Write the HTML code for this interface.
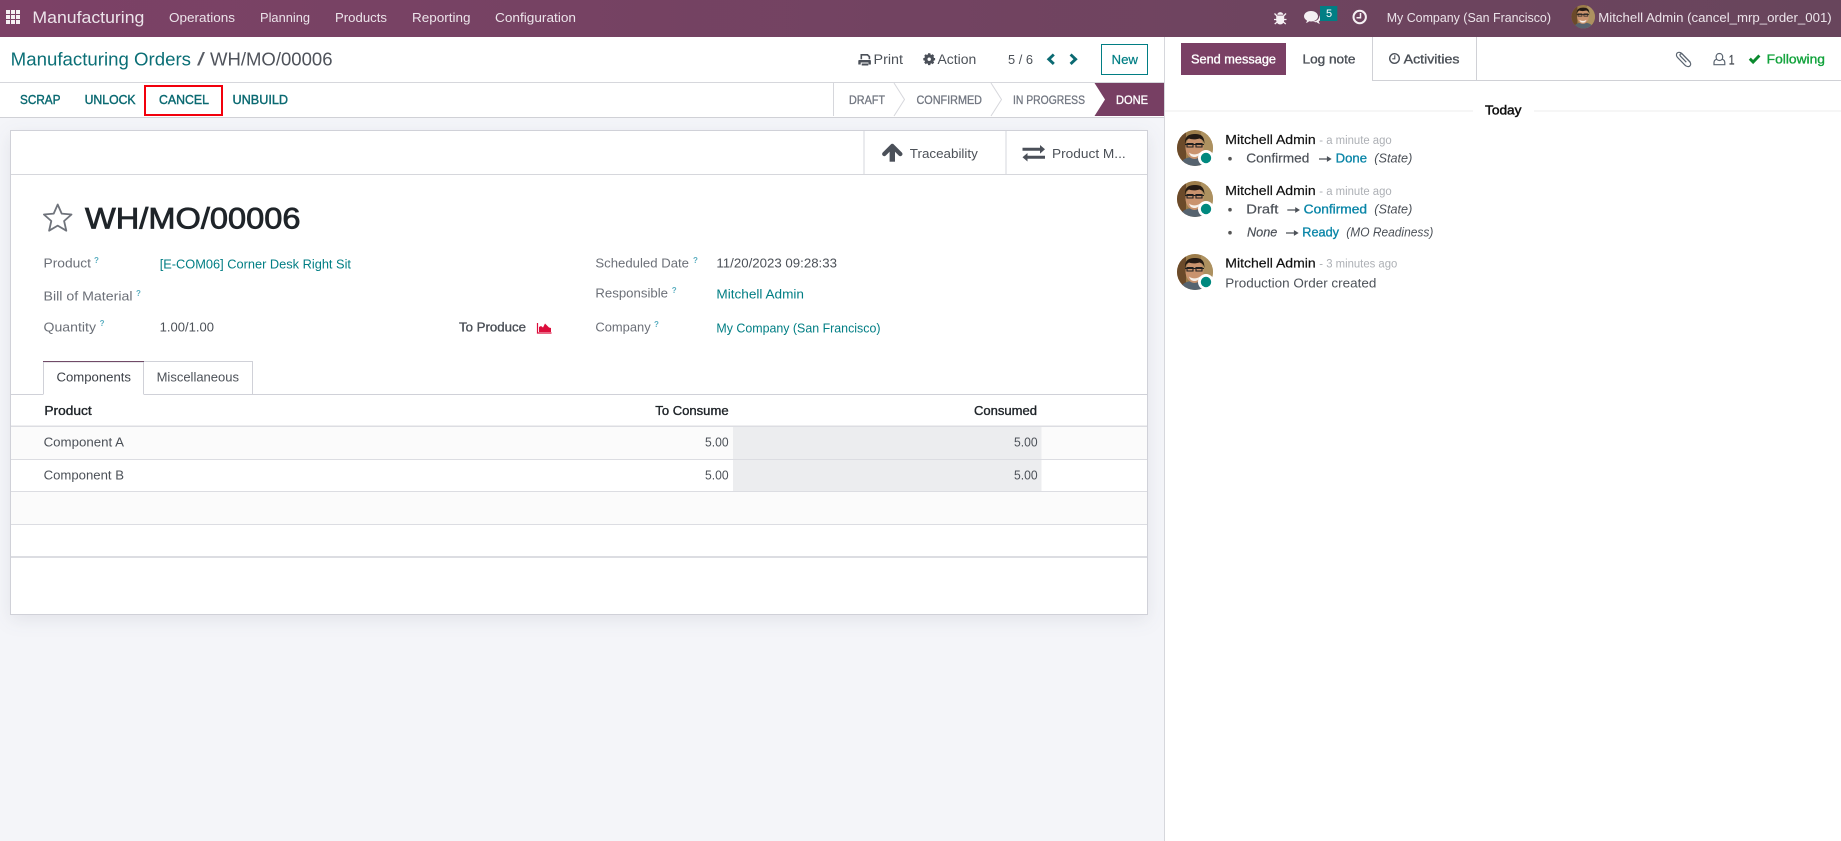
<!DOCTYPE html>
<html lang="en">
<head>
<meta charset="utf-8">
<title>WH/MO/00006</title>
<style>
html,body{margin:0;padding:0;background:#fff;width:1841px;height:841px;overflow:hidden}
svg{display:block}
text{font-family:"Liberation Sans",Arial,sans-serif;font-size:13px;white-space:pre}
.nav{fill:#ece4ea;font-size:13px}
.b{stroke-width:.35px;stroke:currentColor}
.lab{fill:#6c7078}
.val{fill:#4c5158;color:#4c5158}
.link{fill:#017e84}
.q{fill:#5aaec0;font-size:8px;font-weight:bold}
.act{fill:#0b6a72;color:#0b6a72;font-size:12.5px;stroke:#0b6a72;stroke-width:.4px}
.st{fill:#717680;font-size:12px;stroke:#717680;stroke-width:.3px}
.dark{fill:#1f2429;color:#1f2429}
.msg{fill:#4c5158}
.time{fill:#adb0b5;font-size:11.5px}
.blue{fill:#0b86a8;stroke:#0b86a8;stroke-width:.35px}
.it{font-style:italic}
.ic{fill:#4b5059}
</style>
</head>
<body>
<svg xmlns="http://www.w3.org/2000/svg" width="1841" height="841" viewBox="0 0 1841 841">
<defs>
<linearGradient id="navg" x1="0" x2="1" y1="0" y2="0"><stop offset="0" stop-color="#7c4166"/><stop offset="1" stop-color="#68455c"/></linearGradient>
<clipPath id="avc"><circle cx="18" cy="18" r="18"/></clipPath>
<symbol id="av" viewBox="0 0 36 36">
<g clip-path="url(#avc)">
<rect width="36" height="36" fill="#9c7c4a"/>
<rect x="24" width="12" height="36" fill="#ad9160"/>
<rect x="0" width="9" height="36" fill="#6b4a2a"/>
<path d="M3 36c1-7 7-9 15-9s14 2 15 9z" fill="#56636f"/>
<ellipse cx="17.5" cy="17.500" rx="9" ry="11.500" fill="#c9936e"/>
<path d="M8 14C7.500 6 12 4 18 4s9.500 2 9.500 10c-1-4-3-5-5-5.500-4 1.300-8 1-10.500 0-2 .8-3.500 2.500-4 5.500z" fill="#241a14"/>
<path d="M8 14.500h19M10 13.500h6v3.500h-6zM19 13.500h6v3.500h-6z" fill="none" stroke="#1f1f1f" stroke-width="1.100"/>
<path d="M12 22.500c3 2.500 8 2.500 11 0-1 3.500-3 4.500-5.500 4.500S13 26 12 22.500z" fill="#f6efe8"/>
</g>
</symbol>
</defs>

<rect width="1841" height="841" fill="#fff"/>
<rect x="0" y="117" width="1164" height="724" fill="#f4f5f9"/>

<!-- navbar -->
<rect width="1841" height="37" fill="url(#navg)"/>
<g fill="#f5f0f3">
<rect x="6" y="10" width="4" height="4"/><rect x="11" y="10" width="4" height="4"/><rect x="16" y="10" width="4" height="4"/>
<rect x="6" y="15" width="4" height="4"/><rect x="11" y="15" width="4" height="4"/><rect x="16" y="15" width="4" height="4"/>
<rect x="6" y="20" width="4" height="4"/><rect x="11" y="20" width="4" height="4"/><rect x="16" y="20" width="4" height="4"/>
</g>
<text x="32.400" y="23" class="nav" style="font-size:17px" textLength="112" lengthAdjust="spacingAndGlyphs">Manufacturing</text>
<text x="169" y="22" class="nav" textLength="66" lengthAdjust="spacingAndGlyphs">Operations</text>
<text x="260" y="22" class="nav" textLength="50" lengthAdjust="spacingAndGlyphs">Planning</text>
<text x="335" y="22" class="nav" textLength="52" lengthAdjust="spacingAndGlyphs">Products</text>
<text x="412" y="22" class="nav" textLength="58.500" lengthAdjust="spacingAndGlyphs">Reporting</text>
<text x="495" y="22" class="nav" textLength="81" lengthAdjust="spacingAndGlyphs">Configuration</text>

<!-- bug -->
<g fill="#f5f0f3">
<path d="M1277.500 15.500h5.500c.8 0 1.200.5 1.200 1.200v3.300c0 2.600-1.700 4.400-4 4.400s-4-1.800-4-4.400v-3.300c0-.7.500-1.200 1.300-1.200z"/>
<path d="M1277.300 14.800a3 2.700 0 0 1 6 0z"/>
<path d="M1274.500 13.500l2.500 2.500M1286 13.500l-2.500 2.500M1274 19.500h3M1286.500 19.500h-3M1274.700 24l2.500-2M1285.800 24l-2.500-2" stroke="#f5f0f3" stroke-width="1.300" fill="none"/>
</g>
<!-- chat -->
<g fill="#f5f0f3">
<path d="M1311 11c3.900 0 7 2.300 7 5.300s-3.100 5.200-7 5.200c-.7 0-1.300-.1-1.900-.2-.9 1-2.100 1.500-3.200 1.600.7-.8 1-1.600 1-2.400-1.800-.9-2.900-2.500-2.900-4.200 0-3 3.100-5.300 7-5.300z"/>
<path d="M1319.600 15.500c.7.7 1.200 1.600 1.200 2.700 0 1.300-.8 2.400-2 3.100.1.900.5 1.700 1.200 2.500-1.300-.1-2.500-.7-3.300-1.700-1.300.2-2.600.1-3.700-.5 3.500-.2 6.400-2.500 6.600-6.100z"/>
</g>
<rect x="1320" y="6" width="17.300" height="15" fill="#017e84"/>
<text x="1326" y="17" fill="#fff" style="font-size:11px">5</text>
<!-- clock -->
<circle cx="1359.700" cy="17" r="6.200" fill="none" stroke="#f5f0f3" stroke-width="2"/>
<path d="M1360.500 13v4.800h-4" fill="none" stroke="#f5f0f3" stroke-width="1.500"/>
<text x="1386.700" y="22" class="nav" textLength="164.300" lengthAdjust="spacingAndGlyphs">My Company (San Francisco)</text>
<use href="#av" x="1571.500" y="5" width="23.500" height="23.500"/>
<text x="1598.300" y="22" class="nav" textLength="233.400" lengthAdjust="spacingAndGlyphs">Mitchell Admin (cancel_mrp_order_001)</text>

<!-- control panel -->
<text x="10.700" y="65.500" fill="#0b6f76" style="font-size:18px" textLength="180.300" lengthAdjust="spacingAndGlyphs">Manufacturing Orders</text>
<text x="197" y="65.500" fill="#5a5e66" style="font-size:18px" textLength="8" lengthAdjust="spacingAndGlyphs">/</text>
<text x="210" y="65.500" fill="#4f535b" style="font-size:18px" textLength="122.500" lengthAdjust="spacingAndGlyphs">WH/MO/00006</text>

<!-- print icon -->
<path class="ic" fill-rule="evenodd" d="M860.500 54h7.300l2.400 2.400V59.300h-1.600v-2.300l-1.500-1.400h-5V59.300h-1.600zM859.200 60h10.800c.5 0 .9.400.9.900V64.500h-2.400v-2h-7.800v2H858.300v-3.600c0-.5.400-.9.900-.9zM861.700 63.500h6.600V65.500h-6.600z"/>
<text x="873.500" y="64" class="val" style="font-size:13.500px" textLength="29.500" lengthAdjust="spacingAndGlyphs">Print</text>
<!-- gear -->
<path d="M929.200 53.300v11.800M923.300 59.200h11.800M925 55l8.400 8.400M933.400 55l-8.400 8.400" stroke="#4b5059" stroke-width="2.400"/>
<circle cx="929.200" cy="59.200" r="3.600" fill="none" stroke="#4b5059" stroke-width="2.600"/>
<circle cx="929.200" cy="59.200" r="1.700" fill="#fff"/>
<text x="937.500" y="64" class="val" style="font-size:13.500px" textLength="38.800" lengthAdjust="spacingAndGlyphs">Action</text>
<text x="1008" y="64" class="val" textLength="25" lengthAdjust="spacingAndGlyphs">5 / 6</text>
<path d="M1053.800 54.500l-5 4.700 5 4.700" fill="none" stroke="#0b6a72" stroke-width="2.900"/>
<path d="M1070.600 54.500l5 4.700-5 4.700" fill="none" stroke="#0b6a72" stroke-width="2.900"/>
<rect x="1101.500" y="44.500" width="46" height="30" fill="#fff" stroke="#017e84"/>
<text x="1111.500" y="64" class="link" style="font-size:13px;stroke:#017e84;stroke-width:.2px" textLength="26.500" lengthAdjust="spacingAndGlyphs">New</text>

<rect x="0" y="82" width="1164" height="1" fill="#d6d7dc"/>
<rect x="0" y="117" width="1164" height="1" fill="#d0d1d6"/>

<!-- action row -->
<text x="20" y="104" class="act" textLength="40.500" lengthAdjust="spacingAndGlyphs">SCRAP</text>
<text x="84.600" y="104" class="act" textLength="51" lengthAdjust="spacingAndGlyphs">UNLOCK</text>
<text x="159" y="104" class="act" textLength="50" lengthAdjust="spacingAndGlyphs">CANCEL</text>
<text x="232.500" y="104" class="act" textLength="55.500" lengthAdjust="spacingAndGlyphs">UNBUILD</text>
<rect x="145" y="86" width="77" height="29" fill="none" stroke="#f2000c" stroke-width="2"/>

<!-- statusbar -->
<path d="M833.500 83v33" stroke="#d6d7dc" fill="none"/>
<text x="849" y="104" class="st" textLength="36" lengthAdjust="spacingAndGlyphs">DRAFT</text>
<path d="M894 83l10.500 16.500L894 116" stroke="#d6d7dc" fill="none"/>
<text x="916.500" y="104" class="st" textLength="65.500" lengthAdjust="spacingAndGlyphs">CONFIRMED</text>
<path d="M991 83l10.500 16.500L991 116" stroke="#d6d7dc" fill="none"/>
<text x="1013" y="104" class="st" textLength="72" lengthAdjust="spacingAndGlyphs">IN PROGRESS</text>
<path d="M1094.500 83H1164.500V116H1094.500L1105 99.500z" fill="#773f63"/>
<text x="1116" y="104" fill="#fff" style="font-size:12px;stroke:#fff;stroke-width:.35px" textLength="32" lengthAdjust="spacingAndGlyphs">DONE</text>

<!-- sheet -->
<rect x="10.500" y="130.500" width="1137" height="484" fill="#fff" stroke="#d0d1d8" style="filter:drop-shadow(0 5px 9px rgba(60,60,80,.09))"/>
<rect x="11" y="174" width="1136" height="1" fill="#d6d7dc"/>
<rect x="863.500" y="131" width="1" height="43" fill="#d6d7dc"/>
<rect x="1005.500" y="131" width="1" height="43" fill="#d6d7dc"/>
<path d="M892.300 161.700V147" fill="none" stroke="#4b5059" stroke-width="5.400"/>
<path d="M884.300 154l8-8 8 8" fill="none" stroke="#4b5059" stroke-width="4.400" stroke-linejoin="round" stroke-linecap="round"/>
<text x="909.800" y="158" class="val" textLength="68" lengthAdjust="spacingAndGlyphs">Traceability</text>
<path class="ic" d="M1040 145l5 4.300-5 4.300v-2.800h-17.500v-3h17.500zM1027.500 153v2.800h17.500v3h-17.500v2.700l-5-4.200z"/>
<text x="1052" y="158" class="val" textLength="73.700" lengthAdjust="spacingAndGlyphs">Product M...</text>

<!-- title -->
<path d="M57.700 204.500l4 9.100 9.800.9-7.400 6.500 2.200 9.700-8.600-5.100-8.600 5.100 2.200-9.700-7.400-6.500 9.800-.9z" fill="none" stroke="#6f737b" stroke-width="1.800" stroke-linejoin="round"/>
<text x="85" y="228.700" class="dark" style="font-size:30px;stroke:#1f2429;stroke-width:.8px" textLength="215.500" lengthAdjust="spacingAndGlyphs">WH/MO/00006</text>

<!-- form fields -->
<text x="43.500" y="267.700" class="lab" textLength="47.500" lengthAdjust="spacingAndGlyphs">Product</text>
<text x="94" y="263" class="q">?</text>
<text x="159.700" y="268.700" class="link" textLength="191.300" lengthAdjust="spacingAndGlyphs">[E-COM06] Corner Desk Right Sit</text>
<text x="43.500" y="300.700" class="lab" textLength="89" lengthAdjust="spacingAndGlyphs">Bill of Material</text>
<text x="136" y="296" class="q">?</text>
<text x="43.500" y="331.300" class="lab" textLength="52.500" lengthAdjust="spacingAndGlyphs">Quantity</text>
<text x="99.600" y="326" class="q">?</text>
<text x="159.700" y="331.700" class="val" textLength="54.300" lengthAdjust="spacingAndGlyphs">1.00/1.00</text>
<text x="459" y="331.700" class="val b" textLength="67" lengthAdjust="spacingAndGlyphs">To Produce</text>
<path d="M537.500 323v10h14" fill="none" stroke="#dc0e3c" stroke-width="1.200"/>
<path d="M539 332v-5l2-1 2 1.500 2-4 2 2 2 2 2 .5v4z" fill="#dc0e3c"/>

<text x="595.400" y="267.300" class="lab" textLength="93.600" lengthAdjust="spacingAndGlyphs">Scheduled Date</text>
<text x="693" y="263" class="q">?</text>
<text x="716.400" y="267.700" class="val" textLength="120.600" lengthAdjust="spacingAndGlyphs">11/20/2023 09:28:33</text>
<text x="595.400" y="297.700" class="lab" textLength="72.600" lengthAdjust="spacingAndGlyphs">Responsible</text>
<text x="671.700" y="293" class="q">?</text>
<text x="716.400" y="298.300" class="link" textLength="87.600" lengthAdjust="spacingAndGlyphs">Mitchell Admin</text>
<text x="595.400" y="331.700" class="lab" textLength="55.300" lengthAdjust="spacingAndGlyphs">Company</text>
<text x="654" y="327" class="q">?</text>
<text x="716.400" y="332.300" class="link" textLength="164.100" lengthAdjust="spacingAndGlyphs">My Company (San Francisco)</text>

<!-- tabs -->
<rect x="11" y="394" width="1136" height="1" fill="#d0d1d8"/>
<path d="M143.500 361.500H252.500V394" fill="none" stroke="#d0d1d8"/>
<rect x="43" y="361" width="101" height="34" fill="#fff"/>
<path d="M43.500 394.500V362H143.500V394.500" fill="none" stroke="#d0d1d8"/>
<rect x="43" y="361" width="101" height="1" fill="#714b67"/>
<text x="56.500" y="381.700" style="fill:#3c4047" textLength="74.500" lengthAdjust="spacingAndGlyphs">Components</text>
<text x="156.600" y="381.700" class="val" textLength="82.400" lengthAdjust="spacingAndGlyphs">Miscellaneous</text>

<!-- table -->
<text x="44.400" y="415" class="dark b" style="font-size:12.500px" textLength="47.300" lengthAdjust="spacingAndGlyphs">Product</text>
<text x="655.300" y="415" class="dark b" style="font-size:12.500px" textLength="73.300" lengthAdjust="spacingAndGlyphs">To Consume</text>
<text x="974" y="415" class="dark b" style="font-size:12.500px" textLength="63" lengthAdjust="spacingAndGlyphs">Consumed</text>
<rect x="11" y="426" width="1136" height="33" fill="#fbfbfb"/>
<rect x="11" y="491" width="1136" height="33" fill="#fbfbfb"/>
<rect x="733" y="426" width="308.500" height="65" fill="#ecedef"/>
<rect x="11" y="425.500" width="1136" height="1.500" fill="#dcdde2"/>
<rect x="11" y="459" width="1136" height="1" fill="#dcdde2"/>
<rect x="11" y="491" width="1136" height="1" fill="#dcdde2"/>
<rect x="11" y="524" width="1136" height="1" fill="#dcdde2"/>
<rect x="11" y="556" width="1136" height="2" fill="#dcdde2"/>
<text x="43.600" y="446.700" class="val" textLength="80.400" lengthAdjust="spacingAndGlyphs">Component A</text>
<text x="43.600" y="479.700" class="val" textLength="80.400" lengthAdjust="spacingAndGlyphs">Component B</text>
<text x="705" y="446.700" class="val" textLength="23.600" lengthAdjust="spacingAndGlyphs">5.00</text>
<text x="1014" y="446.700" class="val" textLength="23.600" lengthAdjust="spacingAndGlyphs">5.00</text>
<text x="705" y="479.700" class="val" textLength="23.600" lengthAdjust="spacingAndGlyphs">5.00</text>
<text x="1014" y="479.700" class="val" textLength="23.600" lengthAdjust="spacingAndGlyphs">5.00</text>

<!-- chatter -->
<rect x="1164" y="37" width="1" height="804" fill="#d6d7dc"/>
<rect x="1181" y="43" width="105" height="32" fill="#7a4065"/>
<text x="1191" y="63.500" fill="#fff" style="font-size:12.500px;stroke:#fff;stroke-width:.35px" textLength="85" lengthAdjust="spacingAndGlyphs">Send message</text>
<text x="1302.500" y="63.500" class="val b" style="font-size:12.500px" textLength="53" lengthAdjust="spacingAndGlyphs">Log note</text>
<path d="M1372.500 37V80.500H1841M1476.500 37V80" fill="none" stroke="#d0d1d6"/>
<circle cx="1394.500" cy="58.500" r="4.800" fill="none" stroke="#4b5059" stroke-width="1.400"/>
<path d="M1394.800 55.300v3.500h-2.500" fill="none" stroke="#4b5059" stroke-width="1.100"/>
<text x="1403.700" y="63.500" class="val b" style="font-size:12.500px" textLength="55.700" lengthAdjust="spacingAndGlyphs">Activities</text>
<!-- paperclip -->
<path d="M1690.300 62.200l-8.400-8.600c-1.600-1.700-3.900-1.500-4.800-.5-1 1-.9 3 .4 4.300l7.500 7.800c1.800 1.800 4 1.700 5 .6 1-1 .9-2.700-.4-4.100l-7-7.200c-.8-.9-1.800-.9-2.300-.4s-.5 1.400.3 2.200l5.700 5.900" fill="none" stroke="#5a6470" stroke-width="1.200"/>
<!-- user -->
<path d="M1716.500 59.300c-1.800.6-2.500 1.700-2.500 3.200v2.200h10.800v-2.200c0-1.500-.7-2.600-2.500-3.200M1719.400 53.500c-2 0-3.300 1.500-3.300 3.500s1.300 3.500 3.300 3.500 3.300-1.500 3.300-3.500-1.300-3.500-3.300-3.500z" fill="none" stroke="#5a6470" stroke-width="1.200"/>
<text x="1728.700" y="64.500" class="val" style="font-size:14px;stroke:#4c5158;stroke-width:.3px" textLength="5.800" lengthAdjust="spacingAndGlyphs">1</text>
<path d="M1749.800 58.700l3.300 3.300 6.300-6.500" fill="none" stroke="#0a8a2e" stroke-width="2.900"/>
<text x="1766.700" y="63.500" fill="#12a33c" style="font-size:12.500px;stroke:#12a33c;stroke-width:.35px" textLength="58.300" lengthAdjust="spacingAndGlyphs">Following</text>

<rect x="1165" y="110.500" width="308" height="1" fill="#eeeeee"/>
<rect x="1534" y="110.500" width="307" height="1" fill="#eeeeee"/>
<text x="1485" y="114.500" fill="#111" style="font-size:12.500px;stroke:#111;stroke-width:.45px" textLength="36.500" lengthAdjust="spacingAndGlyphs">Today</text>

<!-- msg 1 -->
<use href="#av" x="1177" y="130" width="36" height="36"/>
<circle cx="1206" cy="158" r="8" fill="#fff"/><circle cx="1206" cy="158" r="5.200" fill="#00897f"/>
<text x="1225.300" y="144" fill="#111" style="font-size:13px;stroke:#111;stroke-width:.2px" textLength="90.400" lengthAdjust="spacingAndGlyphs">Mitchell Admin</text>
<text x="1319.300" y="144" class="time" textLength="72.400" lengthAdjust="spacingAndGlyphs">- a minute ago</text>
<circle cx="1230" cy="158.700" r="1.800" fill="#555"/>
<text x="1246.300" y="162.700" class="msg" style="stroke:#4c5158;stroke-width:.2px" textLength="63" lengthAdjust="spacingAndGlyphs">Confirmed</text>
<path d="M1319 159h11M1327.500 157.200l3 1.800-3 1.800z" stroke="#4c5158" fill="#4c5158" stroke-width="1.200"/>
<text x="1335.700" y="162.700" class="blue" textLength="31.300" lengthAdjust="spacingAndGlyphs">Done</text>
<text x="1374.300" y="162.700" class="msg it" textLength="38" lengthAdjust="spacingAndGlyphs">(State)</text>

<!-- msg 2 -->
<use href="#av" x="1177" y="181" width="36" height="36"/>
<circle cx="1206" cy="209" r="8" fill="#fff"/><circle cx="1206" cy="209" r="5.200" fill="#00897f"/>
<text x="1225.300" y="195" fill="#111" style="font-size:13px;stroke:#111;stroke-width:.2px" textLength="90.400" lengthAdjust="spacingAndGlyphs">Mitchell Admin</text>
<text x="1319.300" y="195" class="time" textLength="72.400" lengthAdjust="spacingAndGlyphs">- a minute ago</text>
<circle cx="1230" cy="209.700" r="1.800" fill="#555"/>
<text x="1246.300" y="213.700" class="msg" style="stroke:#4c5158;stroke-width:.2px" textLength="32" lengthAdjust="spacingAndGlyphs">Draft</text>
<path d="M1287.300 210h11M1295.800 208.200l3 1.800-3 1.800z" stroke="#4c5158" fill="#4c5158" stroke-width="1.200"/>
<text x="1303.700" y="213.700" class="blue" textLength="63.300" lengthAdjust="spacingAndGlyphs">Confirmed</text>
<text x="1374.300" y="213.700" class="msg it" textLength="38" lengthAdjust="spacingAndGlyphs">(State)</text>
<circle cx="1230" cy="232.700" r="1.800" fill="#555"/>
<text x="1247" y="236.700" class="msg it" style="stroke:#4c5158;stroke-width:.2px" textLength="30.300" lengthAdjust="spacingAndGlyphs">None</text>
<path d="M1286 233h11M1294.500 231.200l3 1.800-3 1.800z" stroke="#4c5158" fill="#4c5158" stroke-width="1.200"/>
<text x="1302.300" y="236.700" class="blue" textLength="36.700" lengthAdjust="spacingAndGlyphs">Ready</text>
<text x="1346.300" y="236.700" class="msg it" textLength="87" lengthAdjust="spacingAndGlyphs">(MO Readiness)</text>

<!-- msg 3 -->
<use href="#av" x="1177" y="254" width="36" height="36"/>
<circle cx="1206" cy="282" r="8" fill="#fff"/><circle cx="1206" cy="282" r="5.200" fill="#00897f"/>
<text x="1225.300" y="267.700" fill="#111" style="font-size:13px;stroke:#111;stroke-width:.2px" textLength="90.400" lengthAdjust="spacingAndGlyphs">Mitchell Admin</text>
<text x="1319.300" y="267.700" class="time" textLength="78" lengthAdjust="spacingAndGlyphs">- 3 minutes ago</text>
<text x="1225.300" y="287.700" class="msg" textLength="151" lengthAdjust="spacingAndGlyphs">Production Order created</text>
</svg>
</body>
</html>
